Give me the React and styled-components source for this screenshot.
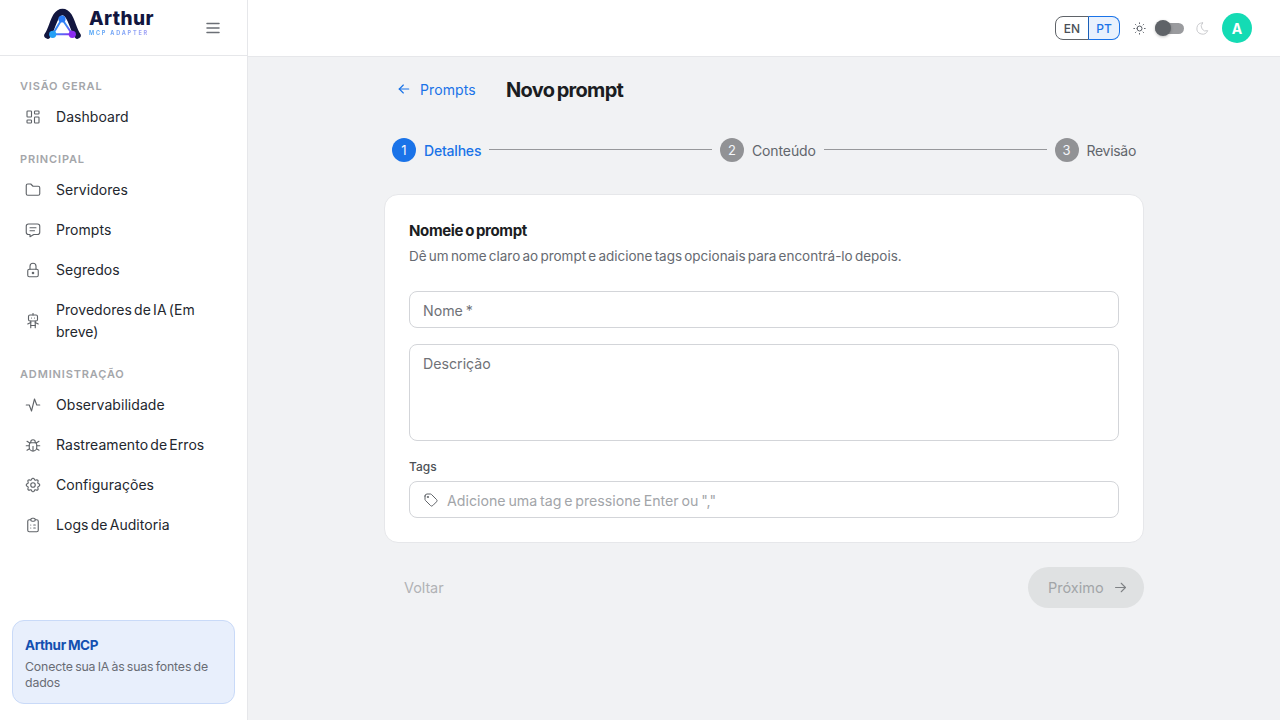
import React from "react";
import styled, { createGlobalStyle } from "styled-components";
import {
  TbLayoutDashboard, TbFolder, TbMessage, TbLock, TbRobot, TbActivity, TbBug, TbSettings,
  TbClipboardList, TbMenu2, TbSun, TbMoon, TbArrowLeft, TbArrowRight, TbTag,
} from "react-icons/tb";

const Global = createGlobalStyle`
  * { box-sizing: border-box; }
  html, body { margin: 0; height: 100%; }
  body { font-family: Inter, "Liberation Sans", sans-serif; background: #f1f2f4; overflow: hidden; }
  #root { height: 100%; }
`;

const Shell = styled.div`display: flex; width: 1280px; height: 720px;`;
const Sidebar = styled.aside`
  width: 248px; flex: none; background: #fff; border-right: 1px solid #e6e7ea;
  display: flex; flex-direction: column;
`;
const Brand = styled.div`
  height: 56px; flex: none; border-bottom: 1px solid #e6e7ea; display: flex; align-items: center;
  padding: 0 25px 0 44px; justify-content: space-between;
`;
const LogoWrap = styled.div`display: flex; align-items: flex-start; gap: 7px; margin-top: -8px;`;
const LogoText = styled.div`display: flex; flex-direction: column; padding-top: 1px;`;
const LogoName = styled.span`font-size: 19px; font-weight: 800; color: #12163f; letter-spacing: 0.4px; line-height: 20px;`;
const LogoSub = styled.span`
  font-size: 5.5px; font-weight: 700; letter-spacing: 1.8px; line-height: 7px; margin-top: 1px;
  background: linear-gradient(90deg, #4aa3f5, #a79cf5); -webkit-background-clip: text; background-clip: text; color: transparent;
`;
const IconBtn = styled.span`display: flex; color: #6b6f76; font-size: 18px;`;
const Nav = styled.nav`flex: 1; padding: 22px 0 0; display: flex; flex-direction: column;`;
const SectionLabel = styled.div`
  height: 16px; line-height: 16px; padding-left: 20px; font-size: 11px; font-weight: 600; color: #a4a6aa;
  letter-spacing: 0.85px; margin: ${p => (p.$first ? "0" : "14px")} 0 3px;
`;
const NavRow = styled.div`
  display: flex; align-items: center; gap: 14px; padding: 9px 0 9px 24px; min-height: 40px; width: 236px;
  color: #23272e; font-size: 14px; line-height: 22px; letter-spacing: 0.05px; word-spacing: -1.8px;
  svg { flex: none; font-size: 18px; color: #5f6368; }
`;
const NavText = styled.span`width: 150px;`;
const InfoCard = styled.div`
  margin: 0 12px 16px; height: 84px; background: #e8effc; border: 1px solid #c9daf8; border-radius: 12px;
  padding: 14px 12px 0;
`;
const InfoTitle = styled.div`font-size: 13.5px; font-weight: 700; color: #1450b0; line-height: 20px; letter-spacing: -0.4px; word-spacing: -0.6px;`;
const InfoText = styled.div`font-size: 12.3px; color: #686c74; line-height: 16px; margin-top: 4px; word-spacing: -1px; letter-spacing: -0.15px;`;

const Main = styled.div`flex: 1; display: flex; flex-direction: column; min-width: 0;`;
const Topbar = styled.header`
  height: 57px; flex: none; background: #fff; border-bottom: 1px solid #e6e7ea; display: flex; align-items: center;
  justify-content: flex-end; padding: 0 28px 0 0;
`;
const LangGroup = styled.div`display: flex; margin-right: 12px;`;
const LangBtn = styled.span`
  height: 24px; display: flex; align-items: center; justify-content: center; font-size: 12px; font-weight: 500;
  width: ${p => (p.$active ? "32px" : "34px")};
  color: ${p => (p.$active ? "#1a73e8" : "#4a4f57")};
  background: ${p => (p.$active ? "#e9f1fd" : "#fff")};
  border: 1px solid ${p => (p.$active ? "#1a73e8" : "#5f6368")};
  border-radius: ${p => (p.$active ? "0 8px 8px 0" : "8px 0 0 8px")};
  ${p => p.$active && "border-left-color: #1a5fb8; margin-left: -1px;"}
`;
const ThemeIcon = styled.span`display: flex; font-size: 15px; color: ${p => p.$c};`;
const Switch = styled.span`
  position: relative; width: 29px; height: 11px; background: #9a9b9e; border-radius: 6px; margin: 0 11px 0 8px;
`;
const Thumb = styled.span`
  position: absolute; left: 0; top: -3px; width: 16px; height: 16px; border-radius: 50%; background: #5f6368;
  box-shadow: 0 1px 3px rgba(0,0,0,.25);
`;
const Avatar = styled.span`
  width: 30px; height: 30px; border-radius: 50%; background: #14dbb4; color: #fff; font-size: 14px; font-weight: 700;
  display: flex; align-items: center; justify-content: center; margin-left: 12px;
`;
const Content = styled.main`width: 760px; margin: 0 auto; padding-top: 19px;`;
const PageHead = styled.div`display: flex; align-items: center; height: 28px; padding-left: 12px;`;
const BackLink = styled.span`
  display: flex; align-items: center; gap: 8px; color: #1a73e8; font-size: 14px; width: 110px; letter-spacing: 0.1px;
  margin-top: -2px;
  svg { font-size: 16px; }
`;
const PageTitle = styled.h1`margin: 0; font-size: 20px; font-weight: 700; color: #1b1d22; letter-spacing: -0.7px; word-spacing: -1.6px; line-height: 28px;`;
const Stepper = styled.div`display: flex; align-items: center; padding: 0 8px; margin-top: 34px; height: 24px;`;
const Step = styled.div`display: flex; align-items: center; gap: 8px;`;
const StepDot = styled.span`
  width: 24px; height: 24px; border-radius: 50%; background: ${p => (p.$active ? "#1a73e8" : "#919295")};
  color: #f4f6fb; font-size: 13px; display: flex; align-items: center; justify-content: center;
`;
const StepLabel = styled.span`
  font-size: 14px; color: ${p => (p.$active ? "#1a73e8" : "#62666c")}; font-weight: ${p => (p.$active ? 500 : 400)};
  letter-spacing: ${p => p.$ls}px;
`;
const Connector = styled.span`flex: 1; height: 1px; background: #97989b; margin: -1px 8px 0;`;
const Card = styled.section`
  margin: 32px 0 0; height: 349px; background: #fff; border: 1px solid #e6e7ea; border-radius: 14px; padding: 25px 24px 0;
`;
const CardTitle = styled.h2`margin: 0; font-size: 15px; font-weight: 700; color: #1b1d22; line-height: 22px; letter-spacing: -0.35px; word-spacing: -1.2px;`;
const CardText = styled.p`margin: 3px 0 0; font-size: 13.5px; color: #666a71; line-height: 22px; word-spacing: -1.5px; letter-spacing: -0.02px;`;
const Field = styled.div`
  display: flex; align-items: ${p => (p.$area ? "flex-start" : "center")}; gap: 8px;
  height: ${p => (p.$area ? "97px" : "37px")}; border: 1px solid #d3d5d9; border-radius: 8px; background: #fff;
  padding: ${p => (p.$area ? "8px 13px" : "2px 13px 0")}; margin-top: ${p => p.$mt}px;
  font-size: 14.2px; line-height: 22px; color: ${p => p.$c || "#6f7278"}; word-spacing: -1.2px;
  svg { color: #5f6368; font-size: 16px; flex: none; margin-top: -2px; }
`;
const TagsLabel = styled.div`margin-top: 18px; font-size: 12px; font-weight: 500; color: #4d5157; line-height: 16px;`;
const Actions = styled.div`display: flex; justify-content: space-between; align-items: center; margin-top: 24px; height: 41px;`;
const BackBtn = styled.span`padding-left: 20px; color: #b1b3b6; font-size: 14.5px; word-spacing: -1px; letter-spacing: -0.1px;`;
const NextBtn = styled.span`
  width: 116px; height: 41px; border-radius: 21px; background: #dfe1e2; color: #a2a5a8; font-size: 14.5px;
  display: flex; align-items: center; padding-left: 20px; gap: 8px;
  svg { font-size: 17px; color: #7f8285; }
`;

const Logo = () => (
  <svg width="38" height="32" viewBox="0 0 38 32">
    <defs>
      <linearGradient id="tri" x1="0" y1="0" x2="1" y2="1">
        <stop offset="0" stopColor="#2b7cf6" /><stop offset="0.55" stopColor="#3d8bf7" /><stop offset="1" stopColor="#8a2cf2" />
      </linearGradient>
    </defs>
    <path d="M3.5 27.5C9 20 10 4 18.5 4C27 4 28 20 33.5 27.5" fill="none" stroke="#12163f" strokeWidth="6.5" strokeLinecap="round" />
    <path d="M18 11L8.7 26.3H28.3Z" fill="#fff" stroke="url(#tri)" strokeWidth="2" strokeLinejoin="round" />
    <circle cx="18" cy="11" r="3.6" fill="#2b7cf6" />
    <circle cx="8.7" cy="26.3" r="3.6" fill="#25a0f5" />
    <circle cx="28.3" cy="26.3" r="3.6" fill="#8a2cf2" />
  </svg>
);

const groups = [
  ["VISÃO GERAL", [[TbLayoutDashboard, "Dashboard"]]],
  ["PRINCIPAL", [[TbFolder, "Servidores"], [TbMessage, "Prompts"], [TbLock, "Segredos"], [TbRobot, "Provedores de IA (Em breve)"]]],
  ["ADMINISTRAÇÃO", [[TbActivity, "Observabilidade"], [TbBug, "Rastreamento de Erros"], [TbSettings, "Configurações"], [TbClipboardList, "Logs de Auditoria"]]],
];

export default function App() {
  return (
    <Shell>
      <Global />
      <Sidebar>
        <Brand>
          <LogoWrap>
            <Logo />
            <LogoText>
              <LogoName>Arthur</LogoName>
              <LogoSub>MCP ADAPTER</LogoSub>
            </LogoText>
          </LogoWrap>
          <IconBtn><TbMenu2 /></IconBtn>
        </Brand>
        <Nav>
          {groups.map(([label, items], i) => (
            <React.Fragment key={label}>
              <SectionLabel $first={i === 0}>{label}</SectionLabel>
              {items.map(([Icon, text]) => (
                <NavRow key={text}>
                  <Icon strokeWidth={1.5} />
                  <NavText>{text}</NavText>
                </NavRow>
              ))}
            </React.Fragment>
          ))}
        </Nav>
        <InfoCard>
          <InfoTitle>Arthur MCP</InfoTitle>
          <InfoText>Conecte sua IA às suas fontes de dados</InfoText>
        </InfoCard>
      </Sidebar>
      <Main>
        <Topbar>
          <LangGroup>
            <LangBtn>EN</LangBtn>
            <LangBtn $active>PT</LangBtn>
          </LangGroup>
          <ThemeIcon $c="#4a4f57"><TbSun strokeWidth={1.5} /></ThemeIcon>
          <Switch><Thumb /></Switch>
          <ThemeIcon $c="#c6c8cb"><TbMoon strokeWidth={1.5} /></ThemeIcon>
          <Avatar>A</Avatar>
        </Topbar>
        <Content>
          <PageHead>
            <BackLink><TbArrowLeft strokeWidth={1.75} />Prompts</BackLink>
            <PageTitle>Novo prompt</PageTitle>
          </PageHead>
          <Stepper>
            <Step><StepDot $active>1</StepDot><StepLabel $active $ls={-0.2}>Detalhes</StepLabel></Step>
            <Connector />
            <Step><StepDot>2</StepDot><StepLabel $ls={-0.1}>Conteúdo</StepLabel></Step>
            <Connector />
            <Step><StepDot>3</StepDot><StepLabel $ls={-0.3}>Revisão</StepLabel></Step>
          </Stepper>
          <Card>
            <CardTitle>Nomeie o prompt</CardTitle>
            <CardText>Dê um nome claro ao prompt e adicione tags opcionais para encontrá-lo depois.</CardText>
            <Field $mt={24}>Nome *</Field>
            <Field $mt={16} $area>Descrição</Field>
            <TagsLabel>Tags</TagsLabel>
            <Field $mt={6} $c="#a2a5a9"><TbTag strokeWidth={1.5} />Adicione uma tag e pressione Enter ou ","</Field>
          </Card>
          <Actions>
            <BackBtn>Voltar</BackBtn>
            <NextBtn>Próximo<TbArrowRight strokeWidth={1.5} /></NextBtn>
          </Actions>
        </Content>
      </Main>
    </Shell>
  );
}
